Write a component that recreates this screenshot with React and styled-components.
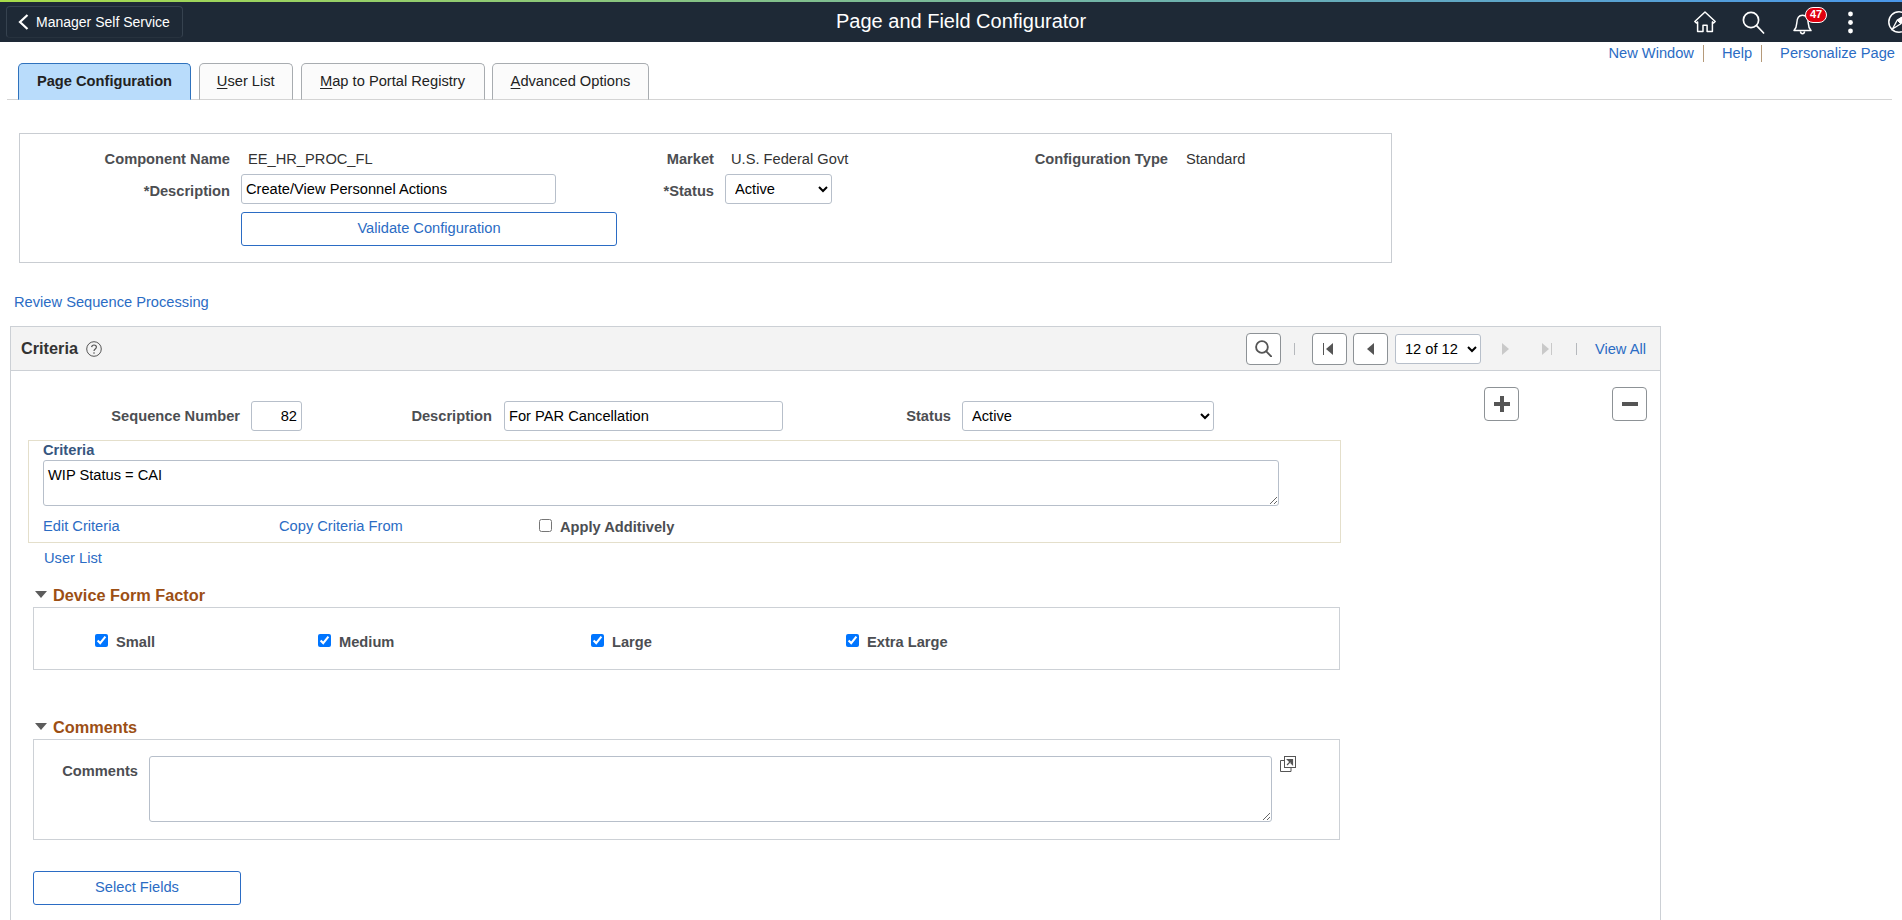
import React from 'react';
import styled, { createGlobalStyle } from 'styled-components';

const GlobalStyle = createGlobalStyle`
  html, body {
    margin: 0;
    height: 100%;
    overflow: hidden;
    background: #fff;
    font-family: "Liberation Sans", Arial, sans-serif;
    font-size: 14.67px;
    color: #000;
  }
  * { box-sizing: border-box; }
`;

const linkBlue = '#2b6cc4';
const labelGrey = '#4c4e52';
const fieldBorder = '#b7bfca';
const baseSize = '14.67px';

const Page = styled.div`
  width: 1902px;
  height: 920px;
  overflow: hidden;
`;

/* header */
const TopBar = styled.header`
  display: flex;
  align-items: flex-start;
  height: 42px;
  background: #1e2936;
  border-top: 2px solid;
  border-image: linear-gradient(90deg, #a8dc4a 0%, #4a97ea 100%) 1;
  overflow: hidden;
`;

const BackButton = styled.a`
  display: flex;
  align-items: center;
  flex: none;
  width: 177px;
  height: 32px;
  margin: 4px 0 0 6px;
  padding-left: 11px;
  gap: 7px;
  border: 1px solid #36424f;
  border-bottom-color: #27323e;
  border-radius: 4px;
  color: #fff;
  font-size: 14px;
`;

const Title = styled.h1`
  margin: 6px 0 0 653px;
  color: #fff;
  font-size: 20px;
  font-weight: 400;
  line-height: 26px;
  white-space: nowrap;
`;

const HeaderIcons = styled.div`
  display: flex;
  align-items: flex-start;
  flex: none;
  margin-left: auto;
  margin-right: -8px;
  padding-top: 9px;
`;

const HeaderIcon = styled.span`
  position: relative;
  display: block;
  flex: none;
  width: ${(p) => p.$w}px;
  height: 22px;
  margin-left: ${(p) => p.$gap || 0}px;
  svg { display: block; overflow: visible; }
`;

const Badge = styled.span`
  position: absolute;
  top: -4px;
  left: 12px;
  width: 22px;
  height: 16px;
  border: 1.5px solid #fff;
  border-radius: 8px;
  background: #e0000f;
  color: #fff;
  font-size: 11px;
  font-weight: 700;
  line-height: 13px;
  text-align: center;
`;

/* links and tabs */
const TopLinks = styled.nav`
  display: flex;
  justify-content: flex-end;
  align-items: center;
  height: 21px;
  padding: 2px 7px 0 0;
`;

const TopLink = styled.a`
  color: ${linkBlue};
  font-size: ${baseSize};
  line-height: 17px;
  white-space: nowrap;
  ${(p) => p.$sep && `
    padding-right: 9px;
    margin-right: 18px;
    border-right: 1px solid #b59a7a;
  `}
`;

const TabBar = styled.div`
  display: flex;
  align-items: flex-end;
  gap: 7.5px;
  height: 37px;
  margin: 0 10px 0 7px;
  padding-left: 11px;
  border-bottom: 1px solid #d4d4d4;
`;

const Tab = styled.a`
  display: flex;
  align-items: center;
  justify-content: center;
  width: ${(p) => p.$w}px;
  height: 37px;
  margin-bottom: -1px;
  padding-bottom: 2px;
  border: 1px solid ${(p) => (p.$active ? '#2f72bd' : '#a8acb0')};
  border-bottom-color: ${(p) => (p.$active ? '#b9dcfb' : '#d4d4d4')};
  border-radius: 5px 5px 0 0;
  background: ${(p) => (p.$active ? '#b9dcfb' : '#fbfbfb')};
  color: #222;
  font-size: ${baseSize};
  font-weight: ${(p) => (p.$active ? 700 : 400)};
  u { text-underline-offset: 2px; }
`;

/* configuration summary */
const SummaryBox = styled.section`
  display: grid;
  grid-template-columns: 210px 387px 97px 107px 347px 1fr;
  grid-template-rows: 24px 30px 34px;
  row-gap: 2px;
  width: 1373px;
  height: 130px;
  margin: 33px 0 0 19px;
  padding: 14px 0 0 0;
  border: 1px solid #c9cdd2;
`;

const FieldLabel = styled.label`
  display: block;
  align-self: center;
  padding-top: ${(p) => p.$drop || 0}px;
  padding-bottom: ${(p) => p.$lift || 0}px;
  color: ${labelGrey};
  font-size: ${baseSize};
  font-weight: 700;
  text-align: right;
  white-space: nowrap;
`;

const ReadValue = styled.span`
  align-self: center;
  padding-left: ${(p) => p.$inset || 18}px;
  padding-bottom: 2px;
  color: #333;
  font-size: ${baseSize};
  white-space: nowrap;
`;

const FieldCell = styled.div`
  padding-left: 11px;
`;

const TextInput = styled.input`
  display: block;
  width: ${(p) => p.$w}px;
  height: 30px;
  padding: 0 4px;
  border: 1px solid ${fieldBorder};
  border-radius: 3px;
  background: #fff;
  color: #000;
  font: ${baseSize} "Liberation Sans", Arial, sans-serif;
  text-align: ${(p) => p.$align || 'left'};
`;

const Select = styled.select`
  display: block;
  flex: none;
  width: ${(p) => p.$w}px;
  height: 30px;
  margin-left: ${(p) => p.$gap || 0}px;
  padding: 0 5px;
  border: 1px solid ${fieldBorder};
  border-radius: 3px;
  background-color: #fff;
  color: #000;
  font: ${baseSize} "Liberation Sans", Arial, sans-serif;
`;

const OutlineButton = styled.button`
  display: block;
  width: ${(p) => p.$w}px;
  height: 34px;
  margin-top: ${(p) => p.$top || 0}px;
  margin-left: ${(p) => p.$left || 0}px;
  padding: 0 0 3px;
  border: 1px solid #2b6cc4;
  border-radius: 3px;
  background: #fff;
  color: ${linkBlue};
  font: ${baseSize} "Liberation Sans", Arial, sans-serif;
`;

const ReviewLink = styled.a`
  display: block;
  margin: 31px 0 0 14px;
  height: 17px;
  color: ${linkBlue};
  font-size: ${baseSize};
  line-height: 17px;
`;

/* criteria panel */
const Panel = styled.section`
  width: 1651px;
  height: 700px;
  margin: 15px 0 0 10px;
  border: 1px solid #ccd0d5;
`;

const PanelHeader = styled.div`
  display: flex;
  align-items: center;
  height: 44px;
  padding: 0 14px 0 10px;
  background: #f3f3f3;
  border-bottom: 1px solid #ccd0d5;
`;

const PanelTitle = styled.h2`
  margin: 0 8px 0 0;
  color: #333;
  font-size: 16.3px;
  font-weight: 700;
`;

const Pager = styled.div`
  display: flex;
  align-items: center;
  margin-left: auto;
`;

const SquareButton = styled.button`
  display: flex;
  align-items: center;
  justify-content: center;
  flex: none;
  width: 35px;
  height: ${(p) => p.$h || 32}px;
  margin-left: ${(p) => p.$gap || 0}px;
  padding: 0;
  border: 1px solid #8d9296;
  border-radius: 4px;
  background: #fff;
`;

const PagerDivider = styled.span`
  flex: none;
  width: 1px;
  height: 12px;
  margin: ${(p) => p.$margin};
  background: #b5b8bc;
`;

const PagerGlyph = styled.span`
  display: block;
  flex: none;
  margin-left: ${(p) => p.$gap}px;
  svg { display: block; }
`;

const ViewAll = styled.a`
  margin-left: 18px;
  color: ${linkBlue};
  font-size: ${baseSize};
`;

const PanelBody = styled.div`
  display: flex;
  align-items: flex-start;
`;

const FormColumn = styled.div`
  flex: none;
  width: 1330px;
  padding: 30px 0 0 17px;
`;

const RowActions = styled.div`
  display: flex;
  gap: 93px;
  padding: 16px 0 0 143px;
`;

const SequenceRow = styled.div`
  display: flex;
  align-items: center;
  height: 30px;
`;

const RowLabel = styled(FieldLabel)`
  flex: none;
  width: ${(p) => p.$w}px;
  margin-right: ${(p) => p.$gap}px;
  padding-top: 0;
`;

const CriteriaBox = styled.div`
  width: 1313px;
  height: 103px;
  margin-top: 9px;
  padding: 2px 0 0 14px;
  border: 1px solid #e4dfcb;
`;

const CriteriaTitle = styled.div`
  height: 17px;
  color: #37567f;
  font-size: ${baseSize};
  font-weight: 700;
  line-height: 15px;
`;

const TextArea = styled.textarea`
  display: block;
  width: ${(p) => p.$w}px;
  height: ${(p) => p.$h}px;
  margin: 0;
  padding: 6px 4px 4px;
  border: 1px solid ${fieldBorder};
  border-radius: 3px;
  background: #fff;
  color: #000;
  font: ${baseSize}/16px "Liberation Sans", Arial, sans-serif;
`;

const CriteriaActions = styled.div`
  display: grid;
  grid-template-columns: 236px 260px 1fr;
  align-items: center;
  height: 22px;
  margin-top: 9px;
`;

const PlainLink = styled.a`
  color: ${linkBlue};
  font-size: ${baseSize};
`;

const CheckField = styled.label`
  display: flex;
  align-items: flex-start;
  gap: 8px;
  padding-top: ${(p) => p.$drop || 0}px;
  color: ${labelGrey};
  font-size: ${baseSize};
  font-weight: 700;
  line-height: 15px;
  input {
    flex: none;
    width: 13px;
    height: 13px;
    margin: 0;
    padding: 0;
  }
  span { padding-top: 1px; }
`;

const UserListLink = styled.a`
  display: block;
  height: 20px;
  margin: 5px 0 0 16px;
  color: ${linkBlue};
  font-size: ${baseSize};
  line-height: 20px;
`;

const SectionHeading = styled.div`
  display: flex;
  align-items: center;
  gap: 6px;
  height: 24px;
  margin-top: ${(p) => p.$top}px;
  padding: 1px 0 0 7px;
  color: #9c4f14;
  font-size: 16.3px;
  font-weight: 700;
`;

const DownTriangle = styled.i`
  display: block;
  width: 0;
  height: 0;
  margin-bottom: 3px;
  border-left: 6px solid transparent;
  border-right: 6px solid transparent;
  border-top: 7px solid #5c5c5c;
`;

const SectionBox = styled.div`
  width: 1307px;
  height: ${(p) => p.$h}px;
  margin-left: 5px;
  border: 1px solid #cdd1d6;
`;

const FormFactorGrid = styled.div`
  display: grid;
  grid-template-columns: 223px 273px 255px auto;
  padding: 26px 0 0 61px;
`;

const CommentsRow = styled.div`
  display: flex;
  align-items: flex-start;
  padding-top: 16px;
`;

const CommentsLabel = styled(FieldLabel)`
  flex: none;
  width: 104px;
  margin-right: 11px;
  padding-top: 7px;
  align-self: flex-start;
`;

const PopupIcon = styled.svg`
  display: block;
  flex: none;
  margin: 0 0 0 8px;
`;

const Home = () => (
  <svg width="22" height="22" viewBox="0 0 22 22" fill="none" stroke="#fff" strokeWidth="1.5" strokeLinejoin="round">
    <path d="M0.8 10.5 11 1l10.2 9.5-1.6 1.5-1.2-1.1V20.5h-5.300v-6.300H9v6.300H3.600V10.900L2.400 12z" />
  </svg>
);

const Search = ({ size = 22, color = '#fff', width = 1.7 }) => (
  <svg width={size} height={size} viewBox="0 0 22 22" fill="none" stroke={color} strokeWidth={width}>
    <circle cx="9" cy="9" r="7.6" />
    <path d="M14.6 14.6 21.6 22" strokeLinecap="round" />
  </svg>
);

const Bell = () => (
  <svg width="19" height="24" viewBox="0 0 19 24" fill="none" stroke="#fff" strokeWidth="1.5" strokeLinejoin="round">
    <path d="M1 19.6c2-2.2 2.6-4 2.7-7.2C3.9 7.6 6 4.3 9.5 4.3s5.6 3.3 5.8 8.1c.1 3.2.7 5 2.7 7.2z" />
    <path d="M7.4 20.4c.2 1.6 1 2.4 2.1 2.4s1.9-.8 2.1-2.4" />
  </svg>
);

const Dots = () => (
  <svg width="5" height="22" viewBox="0 0 5 22" fill="#fff">
    <circle cx="2.5" cy="3" r="2.4" />
    <circle cx="2.5" cy="11.5" r="2.4" />
    <circle cx="2.5" cy="20" r="2.4" />
  </svg>
);

const Compass = () => (
  <svg width="22" height="22" viewBox="0 0 22 22" fill="none" stroke="#fff">
    <circle cx="11" cy="11" r="10.2" strokeWidth="1.5" />
    <path d="M17.5 4 12.8 12.8 4.5 18 9.2 9.2z" fill="#1e2936" strokeWidth="1.3" />
    <path d="M17.5 4 12.8 12.8 9.2 9.2z" fill="#fff" strokeWidth="1" />
  </svg>
);

const Chevron = () => (
  <svg width="11" height="16" viewBox="0 0 11 16" fill="none" stroke="#fff" strokeWidth="2.2">
    <path d="M9.5 1 2 8l7.500 7" />
  </svg>
);

const HelpCircle = () => (
  <svg width="16" height="16" viewBox="0 0 16 16" fill="none" stroke="#555" strokeWidth="1">
    <circle cx="8" cy="8" r="7.3" />
    <path d="M5.6 6.2C5.8 4.8 6.8 4 8 4c1.400 0 2.400.9 2.400 2.100 0 1.800-2.400 1.900-2.400 3.900" strokeWidth="1.200" />
    <circle cx="8" cy="12" r=".8" fill="#555" stroke="none" />
  </svg>
);

const StepIcon = ({ dir, bar, color }) => (
  <svg width="14" height="14" viewBox="0 0 14 14" fill={color}>
    {dir === 'left' ? <path d="M11 1v12L4 7z" /> : <path d="M3 1v12l7-6z" />}
    {bar === 'left' && <rect x="1" y="1" width="1" height="12" />}
    {bar === 'right' && <rect x="12" y="1" width="1" height="12" />}
  </svg>
);

const FormFactor = ({ label }) => (
  <CheckField>
    <input type="checkbox" defaultChecked />
    <span>{label}</span>
  </CheckField>
);

function App() {
  return (
    <Page>
      <GlobalStyle />
      <TopBar>
        <BackButton>
          <Chevron />
          Manager Self Service
        </BackButton>
        <Title>Page and Field Configurator</Title>
        <HeaderIcons>
          <HeaderIcon $w={22}><Home /></HeaderIcon>
          <HeaderIcon $w={22} $gap={26}><Search /></HeaderIcon>
          <HeaderIcon $w={19} $gap={29}>
            <Bell />
            <Badge>47</Badge>
          </HeaderIcon>
          <HeaderIcon $w={5} $gap={35.5}><Dots /></HeaderIcon>
          <HeaderIcon $w={22} $gap={35.5}><Compass /></HeaderIcon>
        </HeaderIcons>
      </TopBar>

      <TopLinks>
        <TopLink $sep>New Window</TopLink>
        <TopLink $sep>Help</TopLink>
        <TopLink>Personalize Page</TopLink>
      </TopLinks>

      <TabBar>
        <Tab $active $w={173}>Page Configuration</Tab>
        <Tab $w={94.5}><span><u>U</u>ser List</span></Tab>
        <Tab $w={184}><span><u>M</u>ap to Portal Registry</span></Tab>
        <Tab $w={157}><span><u>A</u>dvanced Options</span></Tab>
      </TabBar>

      <SummaryBox>
        <FieldLabel $lift={2}>Component Name</FieldLabel>
        <ReadValue $inset={18}>EE_HR_PROC_FL</ReadValue>
        <FieldLabel $lift={2}>Market</FieldLabel>
        <ReadValue $inset={17}>U.S. Federal Govt</ReadValue>
        <FieldLabel $lift={2}>Configuration Type</FieldLabel>
        <ReadValue>Standard</ReadValue>

        <FieldLabel $drop={4}>*Description</FieldLabel>
        <FieldCell><TextInput $w={315} defaultValue="Create/View Personnel Actions" /></FieldCell>
        <FieldLabel $drop={4}>*Status</FieldLabel>
        <FieldCell>
          <Select $w={107} defaultValue="Active"><option>Active</option></Select>
        </FieldCell>
        <span />
        <span />

        <span />
        <FieldCell><OutlineButton $w={376} $top={6}>Validate Configuration</OutlineButton></FieldCell>
      </SummaryBox>

      <ReviewLink>Review Sequence Processing</ReviewLink>

      <Panel>
        <PanelHeader>
          <PanelTitle>Criteria</PanelTitle>
          <HelpCircle />
          <Pager>
            <SquareButton><Search size={17} color="#555" width={2.4} /></SquareButton>
            <PagerDivider $margin="0 17px 0 13px" />
            <SquareButton><StepIcon dir="left" bar="left" color="#555" /></SquareButton>
            <SquareButton $gap={6}><StepIcon dir="left" color="#555" /></SquareButton>
            <Select $w={86} $gap={7} defaultValue="12 of 12"><option>12 of 12</option></Select>
            <PagerGlyph $gap={18}><StepIcon dir="right" color="#c9c9c9" /></PagerGlyph>
            <PagerGlyph $gap={26}><StepIcon dir="right" bar="right" color="#c9c9c9" /></PagerGlyph>
            <PagerDivider $margin="0 0 0 23px" />
            <ViewAll>View All</ViewAll>
          </Pager>
        </PanelHeader>

        <PanelBody>
          <FormColumn>
            <SequenceRow>
              <RowLabel $w={212} $gap={11}>Sequence Number</RowLabel>
              <TextInput $w={51} $align="right" defaultValue="82" />
              <RowLabel $w={190} $gap={12}>Description</RowLabel>
              <TextInput $w={279} defaultValue="For PAR Cancellation" />
              <RowLabel $w={168} $gap={11}>Status</RowLabel>
              <Select $w={252} defaultValue="Active"><option>Active</option></Select>
            </SequenceRow>

            <CriteriaBox>
              <CriteriaTitle>Criteria</CriteriaTitle>
              <TextArea $w={1236} $h={46} defaultValue="WIP Status = CAI" />
              <CriteriaActions>
                <PlainLink>Edit Criteria</PlainLink>
                <PlainLink>Copy Criteria From</PlainLink>
                <CheckField $drop={1}>
                  <input type="checkbox" />
                  <span>Apply Additively</span>
                </CheckField>
              </CriteriaActions>
            </CriteriaBox>

            <UserListLink>User List</UserListLink>

            <SectionHeading $top={15}>
              <DownTriangle />
              Device Form Factor
            </SectionHeading>
            <SectionBox $h={63}>
              <FormFactorGrid>
                <FormFactor label="Small" />
                <FormFactor label="Medium" />
                <FormFactor label="Large" />
                <FormFactor label="Extra Large" />
              </FormFactorGrid>
            </SectionBox>

            <SectionHeading $top={45}>
              <DownTriangle />
              Comments
            </SectionHeading>
            <SectionBox $h={101}>
              <CommentsRow>
                <CommentsLabel>Comments</CommentsLabel>
                <TextArea $w={1123} $h={66} />
                <PopupIcon width="16" height="16" viewBox="0 0 16 16" fill="none" stroke="#555">
                  <path d="M4.500 4.500H.5v11h10.500v-4" />
                  <rect x="4.500" y=".5" width="11" height="11" fill="#fff" />
                  <path d="M7 9l4-4M7.500 3.500h5v5z" fill="#555" strokeWidth="1.200" />
                </PopupIcon>
              </CommentsRow>
            </SectionBox>

            <OutlineButton $w={208} $top={31} $left={5}>Select Fields</OutlineButton>
          </FormColumn>

          <RowActions>
            <SquareButton $h={34}>
              <svg width="18" height="18" viewBox="0 0 18 18" fill="#555"><path d="M7 1h4v6h6v4h-6v6H7v-6H1V7h6z" /></svg>
            </SquareButton>
            <SquareButton $h={34}>
              <svg width="18" height="18" viewBox="0 0 18 18" fill="#555"><rect x="1" y="7" width="16" height="4" /></svg>
            </SquareButton>
          </RowActions>
        </PanelBody>
      </Panel>
    </Page>
  );
}

export default App;
